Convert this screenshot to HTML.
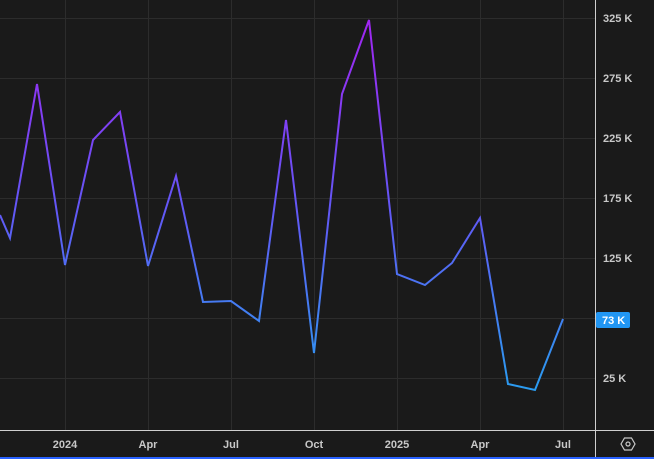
<!DOCTYPE html>
<html><head><style>
html,body{margin:0;padding:0;background:#1a1a1a;width:654px;height:459px;overflow:hidden;font-family:"Liberation Sans",sans-serif;}
</style></head><body>
<svg width="654" height="459" xmlns="http://www.w3.org/2000/svg" style="display:block">
<defs>
<linearGradient id="g" gradientUnits="userSpaceOnUse" x1="0" y1="20" x2="0" y2="390">
<stop offset="0" stop-color="#a126f2"/>
<stop offset="0.5" stop-color="#6456f6"/>
<stop offset="1" stop-color="#2a9cf0"/>
</linearGradient>
</defs>
<rect width="654" height="459" fill="#1a1a1a"/>
<g stroke="#2c2c2c" stroke-width="1">
<line x1="0" y1="18.5" x2="595" y2="18.5"/><line x1="0" y1="78.5" x2="595" y2="78.5"/>
<line x1="0" y1="138.5" x2="595" y2="138.5"/><line x1="0" y1="198.5" x2="595" y2="198.5"/>
<line x1="0" y1="258.5" x2="595" y2="258.5"/><line x1="0" y1="318.5" x2="595" y2="318.5"/>
<line x1="0" y1="378.5" x2="595" y2="378.5"/>
<line x1="65.5" y1="0" x2="65.5" y2="430"/><line x1="148.5" y1="0" x2="148.5" y2="430"/>
<line x1="231.5" y1="0" x2="231.5" y2="430"/><line x1="314.5" y1="0" x2="314.5" y2="430"/>
<line x1="397.5" y1="0" x2="397.5" y2="430"/><line x1="480.5" y1="0" x2="480.5" y2="430"/>
<line x1="563.5" y1="0" x2="563.5" y2="430"/>
</g>
<polyline fill="none" stroke="url(#g)" stroke-width="2" stroke-linejoin="miter" points="0,215 10,238 37,84 65,265 93,140 120,112 148,266 176,176 203,302 231,301 259,321 286,120 314,353 342,94 369,20 397,274 425,285 452,263 480,218 508,384 535,390 563,319"/>
<line x1="595.5" y1="0" x2="595.5" y2="459" stroke="#cfcfcf" stroke-width="1"/>
<line x1="0" y1="430.5" x2="654" y2="430.5" stroke="#cfcfcf" stroke-width="1"/>
<rect x="0" y="457" width="654" height="2" fill="#2962ff"/>
<g fill="#c8c8c8" font-size="11" font-weight="bold">
<text x="603" y="22">325 K</text><text x="603" y="82">275 K</text>
<text x="603" y="142">225 K</text><text x="603" y="202">175 K</text>
<text x="603" y="262">125 K</text><text x="603" y="382">25 K</text>
</g>
<rect x="596" y="312" width="34" height="16" rx="2" fill="#2196f3"/>
<text x="602" y="324" fill="#ffffff" font-size="11" font-weight="bold">73 K</text>
<g fill="#c8c8c8" font-size="11" font-weight="bold" text-anchor="middle">
<text x="65" y="448">2024</text><text x="148" y="448">Apr</text><text x="231" y="448">Jul</text>
<text x="314" y="448">Oct</text><text x="397" y="448">2025</text><text x="480" y="448">Apr</text>
<text x="563" y="448">Jul</text>
</g>
<polygon points="621,444 624.5,438 631.5,438 635,444 631.5,450 624.5,450" fill="none" stroke="#c8c8c8" stroke-width="1.2"/>
<circle cx="628" cy="444" r="2" fill="none" stroke="#c8c8c8" stroke-width="1.2"/>
</svg>
</body></html>
